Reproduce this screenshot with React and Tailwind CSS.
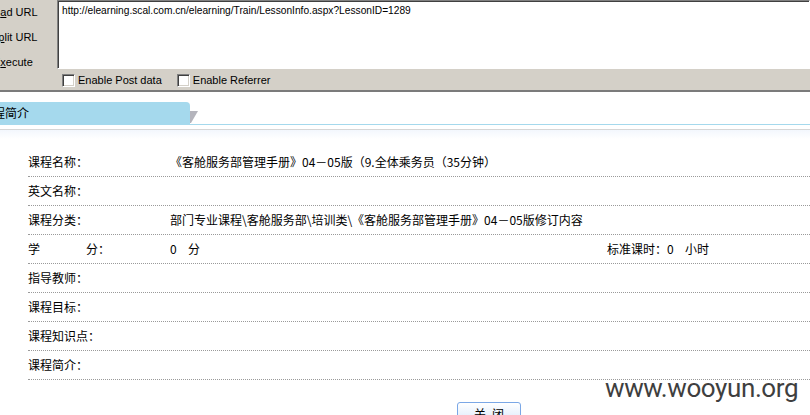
import React from 'react';

const rows = [
  { label: '课程名称：', value: '《客舱服务部管理手册》04－05版（9.全体乘务员（35分钟）' },
  { label: '英文名称：', value: '' },
  { label: '课程分类：', value: '部门专业课程\\客舱服务部\\培训类\\《客舱服务部管理手册》04－05版修订内容' },
  { label: 'credit', value: '' },
  { label: '指导教师：', value: '' },
  { label: '课程目标：', value: '' },
  { label: '课程知识点：', value: '' },
  { label: '课程简介：', value: '' },
];

const Checkbox = ({ label }) => (
  <label className="flex items-center gap-[3px]">
    <span className="w-[13px] h-[13px] bg-white border border-[#808080] border-b-white border-r-white shadow-[inset_1px_1px_0_#404040,inset_-1px_-1px_0_#d4d0c8]" />
    <span>{label}</span>
  </label>
);

const App = () => {
  return (
    <div className="w-[810px] h-[415px] overflow-hidden bg-white relative font-['Noto_Sans_CJK_SC',sans-serif] text-[12px] text-black">
      {/* hackbar toolbar */}
      <div className="h-[92px] bg-[#d4d0c8] border-b-[2px] border-[#7b7b7b] flex font-['Liberation_Sans','DejaVu_Sans',sans-serif] text-[11px]">
        <div className="w-[57px] overflow-hidden shrink-0">
          <div className="-ml-[12px] flex flex-col pt-[5px] gap-[11px] leading-[14px] whitespace-nowrap">
            <span>Lo<u>a</u>d URL</span>
            <span className="ml-[3px]">S<u>p</u>lit URL</span>
            <span className="ml-[5px]">E<u>x</u>ecute</span>
          </div>
        </div>
        <div className="flex-1 flex flex-col">
          <div className="h-[69px] bg-white border border-[#808080] border-b-white border-r-white shadow-[inset_1px_1px_0_#404040] pl-[4px] pt-[3px] leading-[14px] text-[10.2px]">
            http://elearning.scal.com.cn/elearning/Train/LessonInfo.aspx?LessonID=1289
          </div>
          <div className="flex-1 flex items-center pl-[5px] pt-[2px] gap-[15px]">
            <Checkbox label="Enable Post data" />
            <Checkbox label="Enable Referrer" />
          </div>
        </div>
      </div>

      {/* tab header */}
      <div className="mt-[10px] flex items-end border-b border-[#a5d9ed]">
        <div className="w-[190px] h-[22px] bg-[#a5d9ed] rounded-tr-[4px] overflow-hidden flex items-center">
          <span className="-ml-[19px] whitespace-nowrap">课程简介</span>
        </div>
        <svg width="8" height="12" viewBox="0 0 8 12" className="mb-[1px]">
          <polygon points="0,0 8,0 1,12 0,12" fill="#b4b4bc" />
        </svg>
      </div>
      <div className="mt-[4px] h-[10px] border-t border-[#d6d6d6] bg-gradient-to-b from-[#f3f7fd] to-white" />

      {/* course info */}
      <div className="mt-[9px] pl-[28px]">
        {rows.map((row, i) => (
          <div key={i} className="h-[29px] flex items-center border-b border-dotted border-[#9a9a9a]">
            {row.label === 'credit' ? (
              <>
                <div className="w-[142px] flex">
                  <span className="w-[58px]">学</span>
                  <span>分：</span>
                </div>
                <div className="flex-1 flex">
                  <span className="w-[18px]">0</span>
                  <span>分</span>
                </div>
                <div className="w-[203px] flex">
                  <span>标准课时：</span>
                  <span className="w-[18px]">0</span>
                  <span>小时</span>
                </div>
              </>
            ) : (
              <>
                <div className="w-[142px] shrink-0">{row.label}</div>
                <div className="flex-1 whitespace-nowrap">{row.value}</div>
              </>
            )}
          </div>
        ))}
      </div>

      <div className="mt-[22px] ml-[457px]">
        <button className="w-[64px] h-[24px] rounded-[3px] border border-[#7aa7e6] bg-gradient-to-b from-white to-[#d6e6fa] text-[12px] leading-[20px] tracking-[6px] pl-[6px]">
          关闭
        </button>
      </div>

      {/* watermark */}
      <div className="absolute left-[605px] top-[373px] text-[26px] leading-[30px] tracking-[-0.4px] text-[#3f3f3f] font-['Roboto',sans-serif]">
        www.wooyun.org
      </div>
    </div>
  );
};

export default App;
